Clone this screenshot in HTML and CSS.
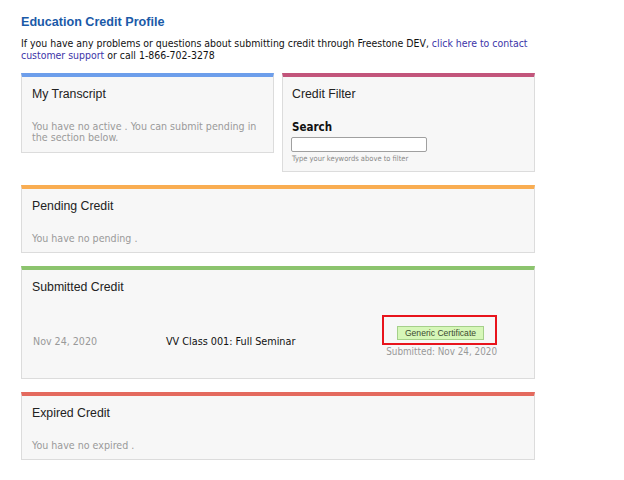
FILE: index.html
```html
<!DOCTYPE html>
<html>
<head>
<meta charset="utf-8">
<link rel="stylesheet" href="styles.css">
</head>
<body>
<div class="page">
  <h1 class="title">Education Credit Profile</h1>
  <p class="intro">If you have any problems or questions about submitting credit through Freestone DEV, <a href="#" class="link">click here to contact customer support</a> or call 1-866-702-3278</p>

  <div class="stack">
    <div class="two-col">
      <section class="card card-blue">
        <h2 class="card-title">My Transcript</h2>
        <p class="muted">You have no active . You can submit pending in the section below.</p>
      </section>
      <section class="card card-pink">
        <h2 class="card-title">Credit Filter</h2>
        <div class="search-label">Search</div>
        <input class="search-input" type="text">
        <div class="hint">Type your keywords above to filter</div>
      </section>
    </div>

    <section class="card card-orange">
      <h2 class="card-title">Pending Credit</h2>
      <p class="muted">You have no pending .</p>
    </section>

    <section class="card card-green">
      <h2 class="card-title">Submitted Credit</h2>
      <div class="credit-row">
        <div class="credit-date">Nov 24, 2020</div>
        <div class="credit-name">VV Class 001: Full Seminar</div>
        <div class="credit-actions">
          <div class="highlight">
            <button class="cert-btn">Generic Certificate</button>
          </div>
          <div class="submitted">Submitted: Nov 24, 2020</div>
        </div>
      </div>
    </section>

    <section class="card card-red">
      <h2 class="card-title">Expired Credit</h2>
      <p class="muted">You have no expired .</p>
    </section>
  </div>
</div>
</body>
</html>
```

FILE: styles.css
```css
html, body {
  margin: 0;
  padding: 0;
  background: #ffffff;
}

.page {
  width: 514px;
  margin-left: 21px;
  padding-top: 14px;
  font-family: "DejaVu Sans Condensed", "DejaVu Sans", sans-serif;
  font-size: 10.6px;
  color: #111;
}

.title {
  margin: 0;
  font-family: "Liberation Sans", Arial, sans-serif;
  font-size: 12.6px;
  line-height: 16px;
  font-weight: bold;
  color: #1a5aa8;
}

.intro {
  margin: 6.6px 0 0 0;
  font-size: 10.45px;
  line-height: 12.4px;
  color: #111;
}

.link {
  color: #3c34a8;
  text-decoration: none;
}

.stack {
  margin-top: 11.6px;
  display: flex;
  flex-direction: column;
  gap: 13px;
}

.two-col {
  display: grid;
  grid-template-columns: 1fr 1fr;
  gap: 8px;
  align-items: start;
}

.card {
  background: #f7f7f7;
  border: 1px solid #dcdcdc;
  border-top: 4px solid #6d9eeb;
  padding: 8px 10px 8px 10px;
}

.card-blue { border-top-color: #6d9eeb; padding-bottom: 9px; }
.card-pink { border-top-color: #c2557b; padding-left: 9px; }
.card-orange { border-top-color: #f9ad52; }
.card-green { border-top-color: #8cc46e; }
.card-red { border-top-color: #e46a5e; }

.card-title {
  margin: 0;
  font-family: "Liberation Sans", Arial, sans-serif;
  font-weight: normal;
  font-size: 12.3px;
  line-height: 18px;
  color: #222;
}

.muted {
  margin: 18px 0 0 0;
  line-height: 11.2px;
  color: #9a9a9a;
}

.search-label {
  margin-top: 17px;
  font-weight: bold;
  font-size: 11.5px;
  line-height: 14px;
  color: #111;
}

.search-input {
  display: block;
  box-sizing: border-box;
  margin: 3px 0 0 -1px;
  width: 136px;
  height: 15px;
  padding: 0 3px;
  border: 1px solid #a0a0a0;
  border-radius: 2px;
  background: #fff;
}

.hint {
  margin-top: 2px;
  font-size: 7.5px;
  line-height: 9px;
  color: #8a8a8a;
}

.credit-row {
  display: grid;
  grid-template-columns: 134px 1fr auto;
  align-items: start;
  margin-top: 19px;
  margin-bottom: 13px;
  padding-right: 27px;
}

.credit-date {
  margin-top: 20px;
  padding-left: 1px;
  line-height: 13px;
  color: #999;
}

.credit-name {
  margin-top: 20px;
  line-height: 13px;
  font-size: 10.75px;
  color: #111;
}

.credit-actions {
  display: flex;
  flex-direction: column;
  align-items: flex-end;
}

.highlight {
  border: 2px solid #e8141c;
  padding: 9px 11px 3px 13px;
}

.cert-btn {
  display: block;
  width: 87px;
  height: 14px;
  padding: 0;
  border: 1px solid #a5d08a;
  background: #d6f7b8;
  font-family: "Liberation Sans", Arial, sans-serif;
  font-size: 8.6px;
  line-height: 12px;
  color: #3c4a30;
}

.submitted {
  margin-top: 1px;
  font-size: 9.8px;
  line-height: 11px;
  color: #999;
}
```
